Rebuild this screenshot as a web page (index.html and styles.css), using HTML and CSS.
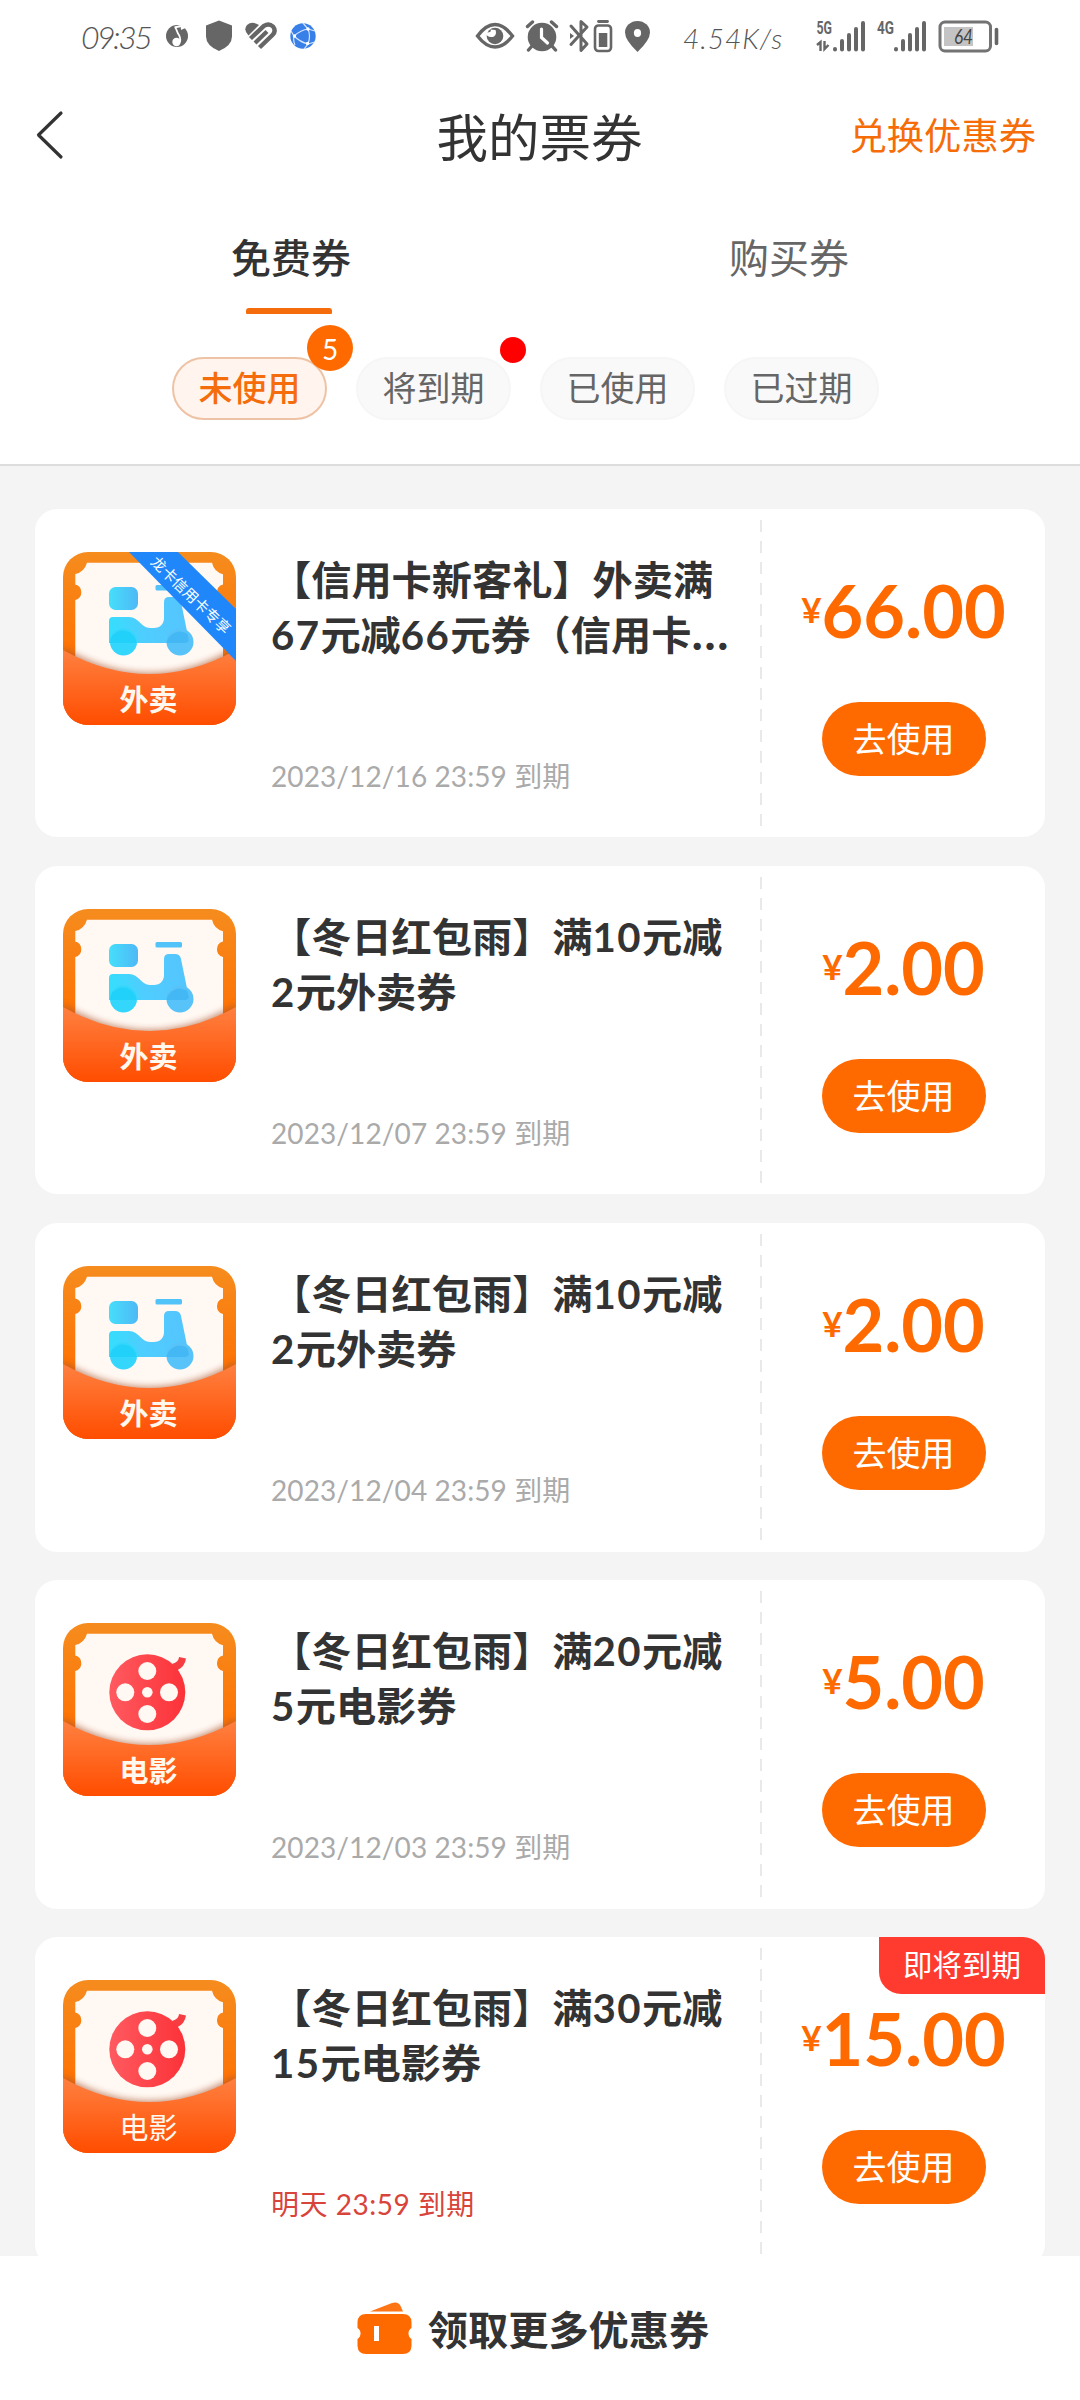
FILE: index.html
```html
<!DOCTYPE html>
<html lang="zh-CN">
<head>
<meta charset="utf-8">
<title>我的票券</title>
<link rel="stylesheet" href="styles.css">
</head>
<body>
<svg class="defs" width="0" height="0" aria-hidden="true">
  <defs>
    <linearGradient id="frame" x1="0" y1="0" x2="0" y2="1"><stop offset="0" stop-color="#f68c1e"/><stop offset=".55" stop-color="#fd7406"/><stop offset="1" stop-color="#ff6a00"/></linearGradient>
    <linearGradient id="pocket" x1="0" y1="0" x2="0" y2="1"><stop offset="0" stop-color="#ff8040"/><stop offset="1" stop-color="#ff4d00"/></linearGradient>
    <linearGradient id="blue" gradientUnits="userSpaceOnUse" x1="46" y1="80" x2="128" y2="60"><stop offset="0" stop-color="#33dffd"/><stop offset=".4" stop-color="#4fcdfe"/><stop offset="1" stop-color="#55c4fe"/></linearGradient>
    <linearGradient id="box" x1="0" y1="0" x2="1" y2="0"><stop offset="0" stop-color="#45dffb"/><stop offset="1" stop-color="#4fb8f6"/></linearGradient>
    <linearGradient id="red" x1="0" y1="0" x2="1" y2="0"><stop offset="0" stop-color="#ff5a60"/><stop offset="1" stop-color="#fb3238"/></linearGradient>
    <clipPath id="round"><rect width="173" height="173" rx="25"/></clipPath>
    <filter id="soft" x="-20%" y="-20%" width="140%" height="140%"><feGaussianBlur stdDeviation="3"/></filter>
    <g id="ticket">
      <rect width="173" height="173" fill="url(#frame)"/>
      <path fill="#fff8f3" d="M24 10.700H149q2 9 11 11.500V32.500a8 8 0 0 0 0 15.500V130H12.300V48a8 8 0 0 0 0-15.500V22q9-2 11.700-11.300z"/>
    </g>
    <g id="flap">
      <path d="M0 95Q86 146 173 95V173H0z" fill="#a8532a" opacity=".6" filter="url(#soft)"/>
      <path d="M0 98Q86 146 173 98V173H0z" fill="url(#pocket)"/>
    </g>
    <g id="scooter">
      <rect x="46" y="35" width="29" height="23" rx="6.500" fill="url(#box)"/>
      <rect x="92.500" y="33" width="26.500" height="5.500" rx="1.500" fill="#52c3f8"/>
      <path fill="url(#blue)" d="M46 69q0-4 4-4H66C76 65 78 76 87 76H91C97 76 101 72 101 66V50q0-5 5-5H112q5 0 6 5L126 89V91H46z"/>
      <circle cx="60.500" cy="90" r="13.500" fill="#35d6fc"/>
      <circle cx="117" cy="90" r="13.500" fill="#58c3f8"/>
      <path d="M48 86a13.500 13.500 0 0 1 25.500 5H47z" fill="#14cdf8" opacity=".6"/>
      <path d="M103.500 91a13.500 13.500 0 0 1 21-9L126 89l-3 2z" fill="#3cb4f4" opacity=".7"/>
    </g>
    <g id="reel">
      <path d="M109 41q7-2 7-7l7 1.500q-1 8-9 12z" fill="#f53d42"/>
      <circle cx="84.300" cy="69.300" r="38" fill="url(#red)"/>
      <g fill="#fff8f3"><circle cx="84.300" cy="48" r="9"/><circle cx="84.300" cy="91" r="9"/><circle cx="62.300" cy="69.300" r="9"/><circle cx="106" cy="69.300" r="9"/><circle cx="84.300" cy="69.300" r="5.300"/></g>
    </g>
  </defs>
</svg>

<div class="screen">
  <div class="status">
    <span class="clock">09:35</span>
    <svg class="s-music" viewBox="165 24 24 24" width="24" height="24"><circle cx="177" cy="36" r="11" fill="#666"/><circle cx="176.500" cy="42" r="4.200" fill="#fff"/><path d="M174.500 27.500l6.500-1.500M175.500 27.500l2.500 6q3 4 2 8.500" fill="none" stroke="#fff" stroke-width="1.800"/><path d="M180.500 24l5 4-4.500 2z" fill="#fff"/></svg>
    <svg class="s-shield" viewBox="206 20 26 31" width="26" height="31"><path d="M219 20.500l13 5v11q0 9-13 14.500-13-5.500-13-14.500v-11z" fill="#666"/></svg>
    <svg class="s-heart" viewBox="245 22 32 28" width="32" height="28"><path d="M248.500 35.500Q243 30 247 25 252 20.500 259 25z" fill="#666"/><path d="M250.500 38.500L264 25.800Q269 22.800 273 26.500 276.500 31 272.500 35L259.500 47.500" fill="none" stroke="#666" stroke-width="4.400"/><path d="M255 43L267 31.500" stroke="#666" stroke-width="4.200"/></svg>
    <svg class="s-globe" viewBox="290 23 26 26" width="26" height="26"><circle cx="303" cy="36" r="12.700" fill="#397fe8"/><path d="M294 36q7-6 14-7 3 7 0 15-8-2-14-8zM308 29l-5-6M308 29l7 2M308 44l7-2M308 44l-4 5M294 36l-3-5M294 36q-1 5 1 9" fill="none" stroke="#d6e6fd" stroke-width="1.200"/><g fill="#fff"><circle cx="308" cy="29" r="1.700"/><circle cx="294.500" cy="36" r="1.700"/><circle cx="307.500" cy="43.500" r="1.700"/></g></svg>
    <svg class="s-eye" viewBox="475 22 40 28" width="40" height="28"><path d="M477.500 36Q486 24.500 495 24.500T512.500 36Q504 47 495 47T477.500 36z" fill="none" stroke="#666" stroke-width="3.400"/><circle cx="495" cy="36" r="8.300" fill="#666"/><path d="M487 32.500q5 0 3.500-3l5 .5q1.500 4-1.500 6.500-4 1.500-7-1z" fill="#fff"/></svg>
    <svg class="s-alarm" viewBox="525 20 34 32" width="34" height="32"><circle cx="542" cy="37" r="14.300" fill="#666"/><path d="M527.500 26.500l5-4.500M556.500 26.500l-5-4.500M532 46l-3.500 4M552 46l3.500 4" stroke="#666" stroke-width="3.400" stroke-linecap="round"/><path d="M541.500 29v8.500l6 5.500" fill="none" stroke="#fff" stroke-width="3.200" stroke-linecap="round"/></svg>
    <svg class="s-bt" viewBox="568 19 22 34" width="22" height="34"><path d="M571 26l16 18-6 6.500V21.500l6 5.500-16 17.500" fill="none" stroke="#666" stroke-width="3" stroke-linejoin="round" stroke-linecap="round"/><path d="M570 33l4 3-4 3z" fill="#666"/></svg>
    <svg class="s-btbat" viewBox="593 19 20 34" width="20" height="34"><path d="M598.500 21.500h9" stroke="#666" stroke-width="2.800" stroke-linecap="round"/><rect x="595" y="25.500" width="16" height="25.500" rx="3.500" fill="none" stroke="#666" stroke-width="2.600"/><rect x="598.800" y="33" width="8.500" height="14" fill="#666"/></svg>
    <svg class="s-pin" viewBox="624 20 27 33" width="27" height="33"><path d="M637.500 52Q625 40 625 32.500a12.500 11.500 0 0 1 25 0Q650 40 637.500 52z" fill="#666"/><ellipse cx="637.500" cy="33" rx="3.600" ry="4" fill="#fff"/></svg>
    <span class="speed">4.54K/s</span>
    <svg class="s-sig5" viewBox="816 18 50 34" width="50" height="34"><text x="816.500" y="34" class="net" textLength="15.500" lengthAdjust="spacingAndGlyphs">5G</text><path d="M817 45l3.500-3V51M824.500 41v8l4-4" fill="none" stroke="#666" stroke-width="2.400"/><path d="M835 49v.5M842 41v8.500M849 35v14.500M856 29v20.500M863 23v26.500" stroke="#666" stroke-width="4" stroke-linecap="round"/></svg>
    <svg class="s-sig4" viewBox="876 18 51 34" width="51" height="34"><text x="877" y="34" class="net" textLength="17" lengthAdjust="spacingAndGlyphs">4G</text><path d="M896 49v.5M903 41v8.500M910 35v14.500M917 29v20.500M924 23v26.500" stroke="#666" stroke-width="4" stroke-linecap="round"/></svg>
    <svg class="s-bat" viewBox="938 19 61 34" width="61" height="34"><rect x="940" y="22" width="50.500" height="29" rx="5" fill="none" stroke="#737373" stroke-width="3"/><rect x="944" y="27" width="29" height="19" fill="#c4c4c4"/><path d="M996.500 29.500v14" stroke="#666" stroke-width="3.600" stroke-linecap="round"/><text x="954" y="44" class="pct" textLength="19" lengthAdjust="spacingAndGlyphs">64</text></svg>
  </div>

  <header class="nav">
    <svg class="back" viewBox="0 0 30 50" width="30" height="50"><path d="M26 3L3.500 25 26 47" fill="none" stroke="#333" stroke-width="3.200" stroke-linecap="round" stroke-linejoin="round"/></svg>
    <h1 class="nav-title">我的票券</h1>
    <a class="nav-action">兑换优惠券</a>
  </header>

  <nav class="tabs">
    <a class="tab tab-on">免费券</a>
    <a class="tab">购买券</a>
  </nav>

  <div class="chips">
    <span class="chip chip-on">未使用<b class="count">5</b></span>
    <span class="chip">将到期<i class="dot"></i></span>
    <span class="chip">已使用</span>
    <span class="chip">已过期</span>
  </div>

  <main class="list">
    <article class="card">
      <svg class="icon" viewBox="0 0 173 173"><g clip-path="url(#round)"><use href="#ticket"/><use href="#scooter"/><use href="#flap"/><path d="M66 0H115L173 57V109z" fill="#1f87fa"/></g><text class="ribbon" transform="translate(127.500 43.500) rotate(44)" text-anchor="middle" y="5">龙卡信用卡专享</text><text class="label" x="85.500" y="158.500" text-anchor="middle">外卖</text></svg>
      <div class="info"><h2 class="name">【信用卡新客礼】外卖满<br><span class="num">67</span>元减<span class="num">66</span>元券（信用卡<span class="more">…</span></h2><p class="date">2023/12/16 23:59 到期</p></div>
      <div class="side"><p class="price"><small>¥</small>66.00</p><a class="use">去使用</a></div>
    </article>
    <article class="card">
      <svg class="icon" viewBox="0 0 173 173"><g clip-path="url(#round)"><use href="#ticket"/><use href="#scooter"/><use href="#flap"/></g><text class="label" x="85.500" y="158.500" text-anchor="middle">外卖</text></svg>
      <div class="info"><h2 class="name">【冬日红包雨】满<span class="num">10</span>元减<br><span class="num">2</span>元外卖券</h2><p class="date">2023/12/07 23:59 到期</p></div>
      <div class="side"><p class="price"><small>¥</small>2.00</p><a class="use">去使用</a></div>
    </article>
    <article class="card">
      <svg class="icon" viewBox="0 0 173 173"><g clip-path="url(#round)"><use href="#ticket"/><use href="#scooter"/><use href="#flap"/></g><text class="label" x="85.500" y="158.500" text-anchor="middle">外卖</text></svg>
      <div class="info"><h2 class="name">【冬日红包雨】满<span class="num">10</span>元减<br><span class="num">2</span>元外卖券</h2><p class="date">2023/12/04 23:59 到期</p></div>
      <div class="side"><p class="price"><small>¥</small>2.00</p><a class="use">去使用</a></div>
    </article>
    <article class="card">
      <svg class="icon" viewBox="0 0 173 173"><g clip-path="url(#round)"><use href="#ticket"/><use href="#reel"/><use href="#flap"/></g><text class="label" x="85.500" y="158.500" text-anchor="middle">电影</text></svg>
      <div class="info"><h2 class="name">【冬日红包雨】满<span class="num">20</span>元减<br><span class="num">5</span>元电影券</h2><p class="date">2023/12/03 23:59 到期</p></div>
      <div class="side"><p class="price"><small>¥</small>5.00</p><a class="use">去使用</a></div>
    </article>
    <article class="card">
      <svg class="icon" viewBox="0 0 173 173"><g clip-path="url(#round)"><use href="#ticket"/><use href="#reel"/><use href="#flap"/></g><text class="label label-thin" x="85.500" y="158.500" text-anchor="middle">电影</text></svg>
      <div class="info"><h2 class="name">【冬日红包雨】满<span class="num">30</span>元减<br><span class="num">15</span>元电影券</h2><p class="date date-soon">明天 23:59 到期</p></div>
      <div class="side"><p class="price"><small>¥</small>15.00</p><a class="use">去使用</a></div>
      <span class="soon">即将到期</span>
    </article>
  </main>

  <footer class="more-bar">
    <svg viewBox="0 0 56 54" width="56" height="54"><path d="M13 10.500L35 2q7-2 9 4l2 4.500z" fill="#ff7415"/><path d="M9 13H46q8 0 8.500 8v6a6.500 6.500 0 0 0 0 11v7q-.5 8-8.500 8H9q-8 0-8.500-8v-7a6.500 6.500 0 0 0 0-11v-6Q1 13 9 13z" fill="#ff6a00"/><rect x="17" y="25" width="5" height="15" fill="#fff"/></svg>
    <span>领取更多优惠券</span>
  </footer>
</div>
</body>
</html>
```
FILE: styles.css
```css
* { box-sizing: border-box; }
body { margin: 0; background: #f4f4f4; font-family: Lato, "Noto Sans CJK SC", sans-serif; color: #333; text-spacing-trim: space-all; }
h1, h2, p { margin: 0; font-weight: 400; }
svg { display: block; flex: none; }
.defs { position: absolute; }
.screen { width: 1080px; height: 2400px; display: flex; flex-direction: column; overflow: hidden; }

/* status bar */
.status { height: 75px; flex: none; background: #fff; display: flex; align-items: flex-start; padding-left: 81px; color: #555; }
.clock, .speed { font-family: Lato, sans-serif; font-weight: 300; font-style: italic; line-height: 30px; white-space: nowrap; flex: none; color: #555; }
.clock { width: 84px; margin-top: 22px; font-size: 32px; letter-spacing: -2.500px; }
.speed { width: 133px; margin: 23px 0 0 32px; font-size: 28px; letter-spacing: 1px; }
.s-music { margin-top: 24px; }
.s-shield { margin: 20px 0 0 17px; }
.s-heart { margin: 22px 0 0 13px; }
.s-globe { margin: 23px 0 0 13px; }
.s-eye { margin: 22px 0 0 159px; }
.s-alarm { margin: 20px 0 0 10px; }
.s-bt { margin: 19px 0 0 9px; }
.s-btbat { margin: 19px 0 0 3px; }
.s-pin { margin: 20px 0 0 11px; }
.s-sig5 { margin-top: 18px; }
.s-sig4 { margin: 18px 0 0 10px; }
.s-bat { margin: 19px 0 0 11px; }
.net { font: 700 18px Roboto, sans-serif; fill: #666; }
.pct { font: italic 400 22px Lato, sans-serif; fill: #444; }

/* header */
.nav { height: 120px; flex: none; background: #fff; display: grid; grid-template-columns: 1fr auto 1fr; align-items: center; padding: 0 44px 0 35px; }
.nav-title { font-size: 51.500px; line-height: 60px; color: #333; margin: 3px -8px 0 0; }
.nav-action { justify-self: end; font-size: 37.300px; line-height: 50px; color: #f56c08; margin-top: 1px; }
.tabs { height: 119px; flex: none; background: #fff; display: flex; padding: 0 42px; }
.tab { flex: 1; display: flex; flex-direction: column; align-items: center; font-size: 40px; line-height: 60px; padding-top: 33px; color: #666; }
.tab-on { color: #333; font-weight: 500; }
.tab-on::after { content: ""; width: 86px; height: 6px; margin: 20px 4px 0 0; border-radius: 3px 3px 1px 1px; background: #f56c0c; }
.chips { height: 152px; flex: none; background: #fff; border-bottom: 2px solid #ddd; display: flex; gap: 29px; padding: 43px 0 0 172px; }
.chip { position: relative; width: 155px; height: 63px; border: 2px solid #f6f6f6; border-radius: 32px; background: #f9f9f9; color: #666; font-size: 34px; line-height: 58px; text-align: center; }
.chip-on { background: #fff5ee; border-color: #eec3a5; color: #f56c0c; font-weight: 500; }
.count { position: absolute; top: -34px; right: -28px; width: 46px; height: 46px; border-radius: 50%; background: #ff6a00; color: #fff; font-size: 28px; line-height: 48px; font-weight: 400; }
.dot { position: absolute; top: -22px; right: -17px; width: 26px; height: 26px; border-radius: 50%; background: #f00; }

/* coupons */
.list { flex: 1; min-height: 0; overflow: hidden; display: flex; flex-direction: column; gap: 28.700px; padding: 43px 35px 0; }
.card { position: relative; flex: none; height: 328.400px; background: #fff; border-radius: 22px; display: flex; padding-left: 28px; }
.icon { width: 173px; height: 173px; margin-top: 43px; }
.label { font: 600 29px "Noto Sans CJK SC", sans-serif; fill: #fff8ee; }
.label-thin { font-weight: 400; }
.ribbon { font: 400 14.800px "Noto Sans CJK SC", sans-serif; fill: #fff; }
.info { width: 524px; flex: none; padding: 44px 0 0 35px; display: flex; flex-direction: column; }
.name { font-weight: 700; font-size: 40.200px; line-height: 54.500px; height: 198px; white-space: nowrap; }
.num { letter-spacing: 1.400px; }
.more { font-size: 48px; line-height: 1; letter-spacing: 0; }
.date { font-size: 28px; line-height: 50px; letter-spacing: .1px; color: #aaa; white-space: nowrap; }
.date-soon { letter-spacing: .5px; color: #d9443a; }
.side { flex: 1; display: flex; flex-direction: column; align-items: center; padding-left: 2px; background: repeating-linear-gradient(to bottom, #e9e9e9 0 12px, transparent 12px 21px) 0 11px / 2px 307px no-repeat; }
.price { height: 193px; padding-top: 61px; font-size: 72px; line-height: 80px; font-weight: 700; color: #ff6a00; white-space: nowrap; }
.price small { font-size: 35px; line-height: 1; position: relative; top: -15px; }
.use { width: 164px; height: 74px; border-radius: 37px; background: #ff6a00; color: #fff; font-size: 34px; line-height: 73px; text-align: center; }
.soon { position: absolute; top: 0; right: 0; width: 166px; height: 57px; border-radius: 0 22px 0 22px; background: #ff3b30; color: #fff; font-size: 29.500px; line-height: 55px; text-align: center; }

.more-bar { height: 144px; flex: none; background: #fff; display: flex; justify-content: center; gap: 15px; padding: 45px 14px 0 0; font-size: 40.200px; line-height: 58px; font-weight: 700; }
```
